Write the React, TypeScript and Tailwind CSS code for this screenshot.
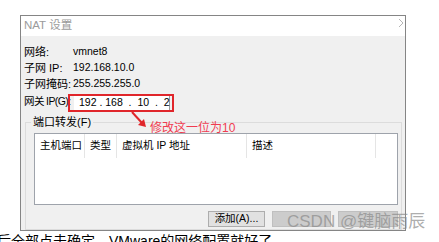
const FONT = '[font-family:"Liberation_Sans","Noto_Sans_CJK_SC",sans-serif]'

function InfoRow({ label, value }: { label: string; value: string }) {
  return (
    <div className="flex h-[16px] items-center">
      <span className="w-[49px] text-[11px] text-black">{label}</span>
      <span className="text-[10.5px] text-black">{value}</span>
    </div>
  )
}

function HeaderCell({ text, width }: { text: string; width: string }) {
  return (
    <div className={`flex h-[24px] items-center border-r border-[#e5e5e5] pl-[5px] text-[10.5px] text-black ${width}`}>
      {text}
    </div>
  )
}

export default function App() {
  return (
    <div className={`relative h-[242px] w-[439px] overflow-hidden bg-white pt-[15px] ${FONT}`}>
      <div className="ml-[20px] flex h-[216px] w-[386px] flex-col border border-[#858585]">
        {/* title bar */}
        <div className="flex h-[20px] items-center justify-between bg-white pl-[3px] pr-[1px]">
          <span className="text-[11.5px] text-[#9b9b9b]">NAT 设置</span>
          <svg width="6" height="10" viewBox="0 0 6 10" className="mb-[6px]">
            <path d="M1 1 L5 5 L1 9" fill="none" stroke="#b5b5b5" strokeWidth="1" />
          </svg>
        </div>

        <div className="flex flex-1 flex-col bg-[#f0f0f0] pl-[3px] pr-[2px] pt-[8px]">
          <InfoRow label="网络:" value="vmnet8" />
          <InfoRow label="子网 IP:" value="192.168.10.0" />
          <InfoRow label="子网掩码:" value="255.255.255.0" />

          <div className="relative flex h-[20px] items-center">
            <span className="w-[44px] shrink-0 whitespace-nowrap text-[10.5px] tracking-[-0.6px] text-black">网关 IP(G):</span>
            <div className="mt-[2px] flex h-[18px] w-[106px] items-center border-2 border-[#e0262b] pl-[4px] pr-[2px]">
              <div className="flex h-full flex-1 items-center border-r border-[#9a9a9a] bg-white pl-[5px] text-[10.5px] text-black">
                192&nbsp;.&nbsp;168&nbsp;&nbsp;.&nbsp;&nbsp;10&nbsp;&nbsp;.&nbsp;&nbsp;2
              </div>
            </div>
          </div>

          {/* port forwarding group */}
          <div className="relative ml-[1px] mr-[1px] mt-[10px] flex-1 border border-[#dcdcdc] pl-[8px] pr-[3px] pt-[10px]">
            <span className="absolute left-[5px] top-[-8px] bg-[#f0f0f0] px-[2px] text-[11px] leading-[14px] text-black">
              端口转发(F)
            </span>
            <div className="h-[72px] border border-[#9ea3ab] bg-white">
              <div className="flex">
                <HeaderCell text="主机端口" width="w-[50px]" />
                <HeaderCell text="类型" width="w-[32px]" />
                <HeaderCell text="虚拟机 IP 地址" width="w-[130px]" />
                <HeaderCell text="描述" width="w-[129px]" />
              </div>
            </div>
            <div className="mt-[6px] flex justify-end gap-[7px]">
              <div className="flex h-[16px] w-[57px] items-center justify-center border border-[#adadad] bg-[#e1e1e1] text-[10.5px] text-black">
                添加(A)...
              </div>
              <div className="h-[16px] w-[59px] border border-[#bfbfbf] bg-[#cccccc]" />
              <div className="h-[16px] w-[60px] border border-[#bfbfbf] bg-[#cccccc]" />
            </div>
          </div>
        </div>
      </div>

      <div className="ml-[-3px] mt-[1px] whitespace-nowrap text-[14px] leading-[18px] text-black">
        后全部点击确定，VMware的网络配置就好了
      </div>

      {/* annotation arrow + note */}
      <svg className="absolute left-[128px] top-[110px]" width="22" height="20" viewBox="0 0 22 20">
        <path d="M4 2 L14 13" stroke="#e0262b" strokeWidth="2" fill="none" />
        <path d="M10 15 L18 17 L16 9 Z" fill="#e0262b" />
      </svg>
      <span className="absolute left-[150px] top-[120px] text-[12px] leading-[16px] text-[#f03c50]">
        修改这一位为10
      </span>

      {/* watermark */}
      <span className="absolute left-[287px] top-[212px] whitespace-nowrap text-[17px] leading-[20px] text-[#8a8a8a]/70">
        CSDN @键脑雨辰
      </span>
    </div>
  )
}
